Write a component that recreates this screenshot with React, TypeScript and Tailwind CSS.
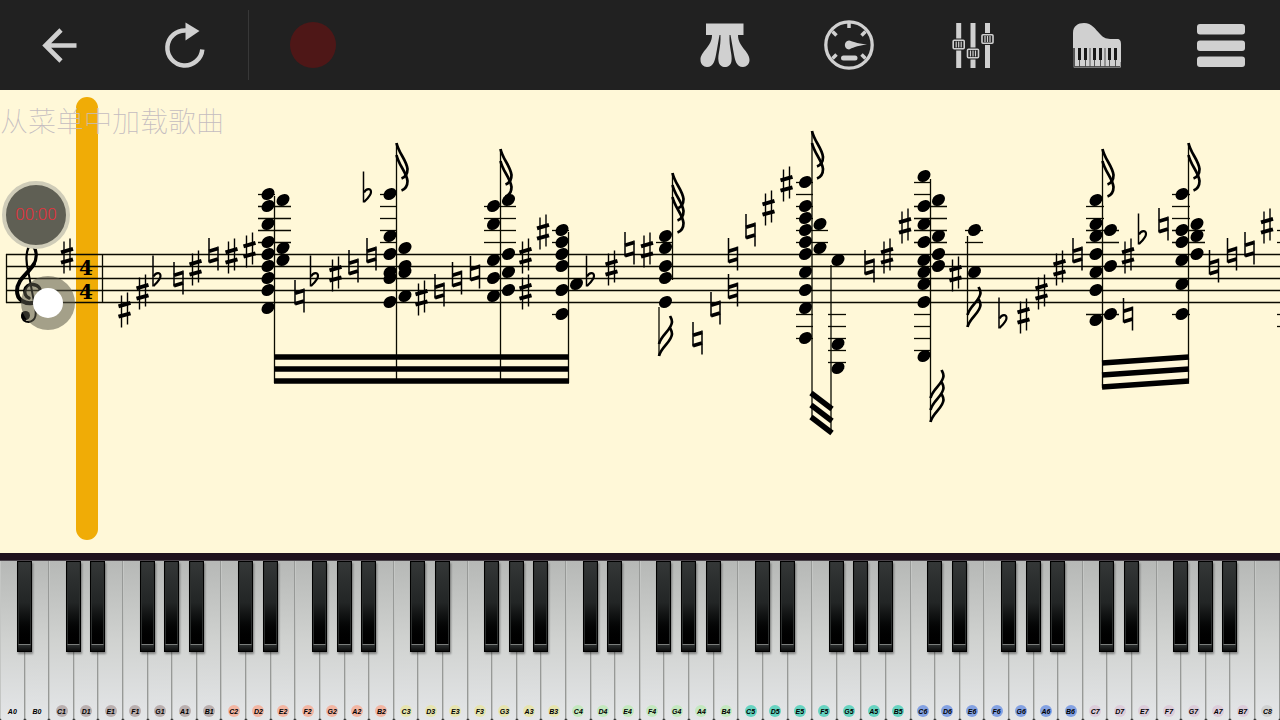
import React from "react";

type AccidentalKind = "sharp" | "natural" | "flat";

const STAFF_TOP = 254.5;
const STEP = 6;
const yOf = (step: number) => STAFF_TOP + step * STEP;

/* Note heads: column x, then steps below the top staff line. */
const heads: [number, number[]][] = [
  [268, [-10, -8, -5, -2, 0, 2, 4, 6, 9]],
  [283, [-9, -1, 1]],
  [390, [-10, -3, 0, 3, 4, 8]],
  [405, [-1, 2, 3, 7]],
  [493.5, [-8, -5, 1, 4, 7]],
  [508.5, [-9, 0, 3, 6]],
  [562, [-4, -2, 0, 2, 6, 10]],
  [576.5, [5]],
  [665.5, [-3, -1, 2, 4, 8]],
  [805.5, [-12, -8, -6, -4, -2, 0, 3, 6, 9, 14]],
  [820, [-5, -1]],
  [838, [1, 15, 19]],
  [924, [-13, -8, -5, -2, 1, 3, 5, 8, 17]],
  [938.5, [-9, -3, 0, 2]],
  [974.5, [-4, 3]],
  [1096, [-9, -5, -3, 0, 3, 6, 11]],
  [1110.5, [-4, 2, 10]],
  [1182, [-10, -4, -2, 1, 5, 10]],
  [1197, [-5, -3, 0]],
];

/* Ledger lines: x from, x to, steps. */
const ledgers: [number, number, number[]][] = [
  [258, 275, [-10]],
  [258, 291, [-8, -6, -4, -2]],
  [380, 397, [-10, -8, -6, -4, -2]],
  [484, 516, [-8, -6, -4, -2]],
  [552, 569, [-4, -2, 10]],
  [656, 673, [-2]],
  [796, 813, [-12, -10, -8, -6, 10, 12, 14]],
  [796, 828, [-4, -2]],
  [828, 846, [10, 12, 14, 16, 18]],
  [914, 931, [-12, -10, 10, 12, 14, 16]],
  [914, 947, [-8, -6, -4, -2]],
  [965, 983, [-4, -2]],
  [1086, 1104, [-8, -6]],
  [1086, 1119, [-4, -2, 10]],
  [1172, 1190, [-10, -8, -6, 10]],
  [1172, 1205, [-4, -2]],
  [1277, 1300, [-4, -2, 10, 12]],
];

const stems: [number, number, number][] = [
  [274.5, 196, 383],
  [396.5, 143, 380],
  [500.5, 149, 380],
  [568.5, 232, 383],
  [672.5, 173, 280],
  [659, 307, 356],
  [812, 131, 419],
  [831, 265, 433],
  [930.5, 179, 422],
  [967.5, 236, 327],
  [1102.5, 149, 388],
  [1188.5, 143, 382],
];

const accidentals: [AccidentalKind, number, number][] = [
  ["sharp", 67, 0], ["sharp", 124.5, 9], ["sharp", 142.5, 6], ["flat", 153, 4],
  ["natural", 178.5, 4], ["sharp", 195.5, 2], ["natural", 213.5, 0], ["sharp", 231.5, 0],
  ["sharp", 249.5, -1], ["natural", 299.5, 7], ["flat", 310.5, 4], ["sharp", 335.5, 3],
  ["natural", 353.5, 2], ["natural", 371.5, 0], ["flat", 363.5, -10], ["sharp", 421.5, 7],
  ["natural", 439.5, 6], ["natural", 457, 4], ["natural", 475, 3], ["sharp", 525.5, 0],
  ["sharp", 525.5, 6], ["sharp", 543, -4], ["flat", 586.5, 4], ["sharp", 611.5, 2],
  ["natural", 629.5, -1], ["sharp", 647, -1], ["natural", 697.5, 14], ["natural", 715.5, 9],
  ["natural", 733, 6], ["natural", 733, 0], ["natural", 750.5, -4], ["sharp", 768.5, -8],
  ["sharp", 786.5, -12], ["natural", 869.5, 2], ["sharp", 887, 0], ["sharp", 905, -5],
  ["sharp", 955.5, 3], ["flat", 999, 11], ["sharp", 1023.5, 10], ["sharp", 1041.5, 6],
  ["sharp", 1059.5, 2], ["natural", 1077.5, 0], ["sharp", 1128, 0], ["natural", 1128, 10],
  ["flat", 1138.5, -3], ["natural", 1163.5, -5], ["natural", 1214, 2], ["natural", 1232, 0],
  ["natural", 1249.5, -1], ["sharp", 1267, -5],
];

/* Flags: stem x, stem end y, count, hanging from the top or rising from the foot. */
const flags: [number, number, number, "down" | "up"][] = [
  [396.5, 143, 2, "down"],
  [500.5, 149, 2, "down"],
  [672.5, 173, 3, "down"],
  [812, 131, 2, "down"],
  [1102.5, 149, 2, "down"],
  [1188.5, 143, 2, "down"],
  [659, 356, 2, "up"],
  [930.5, 422, 3, "up"],
  [967.5, 327, 2, "up"],
];

const beams: [number, number, number, number][] = [
  [274, 357, 569, 357], [274, 369, 569, 369], [274, 381, 569, 381],
  [811, 393, 832, 409], [811, 405, 832, 421], [811, 417, 832, 433],
  [1102, 363, 1189, 357], [1102, 375, 1189, 369], [1102, 387, 1189, 381],
];

function Accidental({ kind, x, step }: { kind: AccidentalKind; x: number; step: number }) {
  const y = yOf(step);
  if (kind === "sharp") {
    return (
      <g transform={`translate(${x} ${y + 1})`} stroke="#000">
        <path d="M-3 -14V18M3 -17V15" strokeWidth="1.4" />
        <path d="M-6 -3.2L6 -6.6M-6 7.2L6 3.8" strokeWidth="3.8" />
      </g>
    );
  }
  if (kind === "natural") {
    return (
      <g transform={`translate(${x} ${y})`} stroke="#000">
        <path d="M-4.5 -16.5V8M4.5 -8V16" strokeWidth="1.5" />
        <path d="M-4.5 -3.2L4.5 -6M-4.5 7.3L4.5 4.5" strokeWidth="3.8" />
      </g>
    );
  }
  return (
    <g transform={`translate(${x} ${y})`} stroke="#000" fill="none">
      <path d="M0 -23V8" strokeWidth="1.5" />
      <path d="M0.5 -2C3 -6.500 7.500 -6.500 7.500 -2.500C7.500 1 4 4 0.500 7.500" strokeWidth="2.200" />
    </g>
  );
}

function Flag({ x, y, count, dir }: { x: number; y: number; count: number; dir: "down" | "up" }) {
  const d =
    dir === "down"
      ? "M0 0C2 10 10 17 11 26C11 31 9 34 5 35.500"
      : "M0 0C2 -9 12.500 -14 13 -22C13 -25 12 -26 11 -28";
  return (
    <g fill="none" stroke="#000" strokeWidth="2.700">
      {Array.from({ length: count }, (_, i) => (
        <path key={i} d={d} transform={`translate(${x} ${y + (dir === "down" ? 12 : -12) * i})`} />
      ))}
    </g>
  );
}

function Clef() {
  return (
    <g fill="none" stroke="#000" strokeLinecap="round">
      <path d="M28.500 272C25 260 26 248 31.500 244" strokeWidth="2.200" />
      <path d="M31.500 244C37 249 38 258 33 266" strokeWidth="3.200" />
      <path d="M34 264C28 274 17 279 17 291C17 300 25 304 32 303" strokeWidth="4" />
      <path d="M32 303C42 302 45 286 33 284.500C24 283.500 22 295 29 298" strokeWidth="3.400" />
      <path d="M28 270L35.500 310C37 320 31 323 26 321.500C22 320 21 316 24 314" strokeWidth="2" />
      <circle cx="25.500" cy="315.500" r="4.500" fill="#000" stroke="none" />
    </g>
  );
}

function Score() {
  return (
    <svg className="absolute inset-0 h-full w-full" role="img" aria-label="Sheet music">
      <g transform="translate(0 -90)">
        <rect x="76" y="97" width="22" height="443" rx="11" fill="#f0ac06" />
        <g stroke="#0a0a00" strokeWidth="1.300">
          {[0, 2, 4, 6, 8].map((s) => (
            <line key={s} x1="6" x2="100%" y1={yOf(s)} y2={yOf(s)} />
          ))}
          <path d="M6.500 254V303M102.500 254V303" />
          {ledgers.map(([a, b, steps]) =>
            steps.map((s) => <line key={`${a}-${b}-${s}`} x1={a} x2={b} y1={yOf(s)} y2={yOf(s)} />),
          )}
          {stems.map(([x, a, b]) => (
            <line key={x} x1={x} x2={x} y1={a} y2={b} />
          ))}
        </g>
        <g stroke="#000" strokeWidth="5.600">
          {beams.map(([a, b, c, d], i) => (
            <line key={i} x1={a} y1={b} x2={c} y2={d} />
          ))}
        </g>
        {heads.map(([x, steps]) =>
          steps.map((s) => (
            <ellipse
              key={`${x}-${s}`}
              rx="7"
              ry="5.400"
              transform={`translate(${x} ${yOf(s) - 0.5}) rotate(-35)`}
            />
          )),
        )}
        {accidentals.map(([kind, x, step]) => (
          <Accidental key={`${x}-${step}`} kind={kind} x={x} step={step} />
        ))}
        {flags.map(([x, y, count, dir]) => (
          <Flag key={x} x={x} y={y} count={count} dir={dir} />
        ))}
        <Clef />
        <g className="font-['DejaVu_Serif',serif] text-[20px] font-bold" textAnchor="middle">
          <text x="86" y="275">4</text>
          <text x="86" y="299">4</text>
        </g>
      </g>
    </svg>
  );
}

const iconButton = "flex h-[50px] w-[50px] items-center justify-center text-[#d0d0d0]";

function Toolbar() {
  return (
    <header className="flex h-[90px] shrink-0 items-center justify-between bg-[#212121] pr-[34px] pl-[35px]">
      <div className="flex items-center">
        <button type="button" aria-label="Back" className={iconButton}>
          <svg viewBox="0 0 50 50" className="h-full w-full" fill="none" stroke="currentColor" strokeWidth="4.600">
            <path d="M41.500 25.500H10M26 10L10.500 25.500L26 41" />
          </svg>
        </button>
        <button type="button" aria-label="Restart" className={`${iconButton} ml-[75px]`}>
          <svg viewBox="0 0 50 50" className="h-full w-full">
            <path d="M26 10.500A17.500 17.500 0 1 0 42.300 29.500" fill="none" stroke="currentColor" strokeWidth="4.500" />
            <path d="M25.500 2.500L39.500 11L25.500 20.500Z" fill="currentColor" />
          </svg>
        </button>
        <div className="ml-[38px] h-[70px] w-px bg-[#383838]" />
        <button type="button" aria-label="Record" className={`${iconButton} ml-[39px]`}>
          <span className="h-[46px] w-[46px] rounded-full bg-[#4e1717]" />
        </button>
      </div>
      <div className="flex items-center gap-[74px]">
        <button type="button" aria-label="Pedals" className={iconButton}>
          <svg viewBox="0 0 50 50" className="h-full w-full" fill="currentColor">
            <path d="M6 3.500H43.500V15H38C38 27 49.500 31 49.500 40C49.500 44 46.500 47 43 47C36 47 35 40 33.500 32L30.500 15H29.500C29 28 32.500 34 31.500 41C31 45 28 47 25 47C22 47 19 45 18.500 41C17.500 34 21 28 20.500 15H19.500L16.500 32C15 40 14 47 7 47C3.500 47 0.500 44 0.500 40C0.500 31 12 27 12 15H6Z" />
          </svg>
        </button>
        <button type="button" aria-label="Tempo" className={iconButton}>
          <svg viewBox="0 0 50 50" className="h-full w-full" fill="none" stroke="currentColor">
            <circle cx="25" cy="25" r="23.200" strokeWidth="3.300" />
            <path d="M25 2V8M8.500 11.500L12.500 15.500M41.500 11.500L37.500 15.500M8.500 38.500L12.500 34.500M41.500 38.500L37.500 34.500" strokeWidth="3.500" />
            <path d="M19.500 38H31" strokeWidth="5" strokeLinecap="round" />
            <path d="M25 20.500C28 21 32 23.500 43 24.500C32 26 28 28 25 29.500C19.500 29 19.500 21 25 20.500Z" fill="currentColor" stroke="none" />
          </svg>
        </button>
        <button type="button" aria-label="Mixer" className={iconButton}>
          <svg viewBox="0 0 50 50" className="h-full w-full">
            <path d="M10.700 3V48M25 3V48M39.500 3V48" stroke="currentColor" strokeWidth="5" />
            {[[10.7, 24.5], [25, 33.5], [39.5, 19]].map(([x, y]) => (
              <g key={x} transform={`translate(${x} ${y})`}>
                <rect x="-7" y="-6" width="14" height="12" fill="#212121" />
                <rect x="-5.500" y="-4.300" width="11" height="8.600" rx="1" fill="#212121" stroke="currentColor" strokeWidth="1.600" />
                <path d="M-2.500 -3V3M0 -3V3M2.500 -3V3" stroke="currentColor" strokeWidth="1.200" />
              </g>
            ))}
          </svg>
        </button>
        <button type="button" aria-label="Instrument" className={iconButton}>
          <svg viewBox="0 0 50 50" className="h-full w-full" fill="currentColor">
            <path d="M1 28V13C1 6 6 3 12 3C20 3 23 9 28 14C32 18.500 35 19 40 19H45C48 19 49 21 49 24V42H48V28Z" />
            <rect x="1.700" y="28" width="47" height="19.500" fill="#d0d0d0" />
            <path d="M7.500 28V40M13.500 28V40M22.500 28V40M28.500 28V40M37.500 28V40M43.500 28V40" stroke="#181818" strokeWidth="3" />
            <path d="M2.500 28V46M7.500 40V46.500M13.500 40V46.500M18 28V46.500M22.500 40V46.500M28.500 40V46.500M33 28V46.500M37.500 40V46.500M43.500 40V46.500M2 46.500H48" stroke="#333" strokeWidth="0.800" />
          </svg>
        </button>
        <button type="button" aria-label="Menu" className={iconButton}>
          <svg viewBox="0 0 50 50" className="h-full w-full" fill="currentColor">
            <rect x="1" y="4" width="48" height="10.500" rx="3" />
            <rect x="1" y="20.500" width="48" height="10.500" rx="3" />
            <rect x="1" y="36.500" width="48" height="10.500" rx="3" />
          </svg>
        </button>
      </div>
    </header>
  );
}

const octaveTint = [
  "bg-transparent",
  "bg-[#b9aeae]",
  "bg-[#f2b5a2]",
  "bg-[#e6e4ae]",
  "bg-[#c3e8be]",
  "bg-[#66d3c0]",
  "bg-[#83a1e2]",
  "bg-[#dcccda]",
  "bg-[#cfd0d0]",
];

const whiteKeys = Array.from({ length: 52 }, (_, i) => {
  const letter = "ABCDEFG"[i % 7];
  const octave = Math.floor((i + 5) / 7);
  return { letter, octave, sharp: i < 51 && letter !== "B" && letter !== "E" };
});

function Keyboard() {
  return (
    <div className="flex h-[159px] shrink-0 bg-black">
      {whiteKeys.map(({ letter, octave, sharp }, i) => (
        <div key={i} className="relative min-w-0 flex-1">
          <button
            type="button"
            className="flex h-full w-full flex-col items-center justify-end rounded-b-[2px] border-r border-l border-r-[#979997] border-l-[#c4c6c4] bg-linear-to-b from-[#b6b8b6] via-[#d0d2d0] to-[#e4e6e8] pb-[3px]"
          >
            <span
              className={`flex h-[12px] w-[12px] items-center justify-center rounded-full font-['Liberation_Sans',sans-serif] text-[7px] leading-none font-bold text-black italic ${octaveTint[octave]}`}
            >
              {letter}
              {octave}
            </span>
          </button>
          {sharp && (
            <button
              type="button"
              aria-label={`${letter} sharp ${octave}`}
              className="absolute top-0 -right-[7px] z-10 flex h-[91px] w-[15px] flex-col border border-black bg-[#101212] shadow-[1px_2px_2px_rgba(0,0,0,0.4)]"
            >
              <span className="w-full flex-1 border-x border-b border-x-[#2c2f2e] border-b-[#7a7d7b] bg-linear-to-b from-[#343737] via-[#222525] to-black" />
              <span className="h-[6px] w-full bg-linear-to-b from-[#2b2e2e] to-[#0c0d0d]" />
            </button>
          )}
        </div>
      ))}
    </div>
  );
}

export default function App() {
  return (
    <div className="flex h-screen flex-col overflow-hidden bg-[#fff8d8]">
      <Toolbar />
      <main className="relative min-h-0 flex-1 overflow-hidden bg-[#fff8d8]">
        <Score />
        <h1 className="relative pt-[14px] font-['Noto_Sans_CJK_SC',sans-serif] text-[28px] leading-[32px] font-thin text-[#c4bcc0]">
          从菜单中加载歌曲
        </h1>
        <div className="absolute top-[91px] left-[2px] flex h-[68px] w-[68px] items-center justify-center rounded-full border-[4px] border-[#cfccb8] bg-[#5f5f54] font-['Roboto','Liberation_Sans',sans-serif] text-[17px] font-light text-[#e8303c]">
          00:00
        </div>
        <div className="absolute top-[186px] left-[21px] flex h-[54px] w-[54px] items-center justify-center rounded-full bg-[#5a5848]/55">
          <span className="h-[30px] w-[30px] rounded-full bg-white" />
        </div>
      </main>
      <div className="h-[8px] shrink-0 border-b border-[#4a444a] bg-[#1f131d]" />
      <Keyboard />
    </div>
  );
}
